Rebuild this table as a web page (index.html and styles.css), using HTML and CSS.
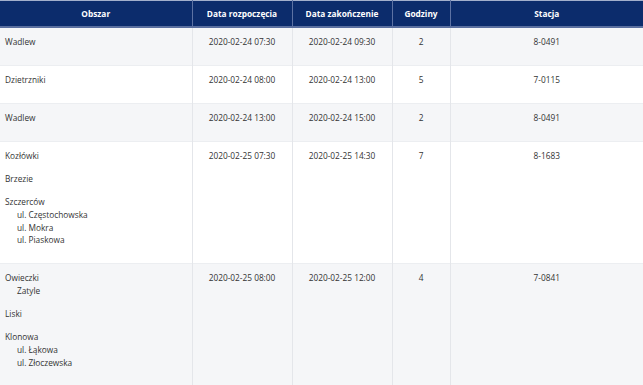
FILE: index.html
```html
<!DOCTYPE html>
<html lang="pl">
<head>
<meta charset="utf-8">
<title>Harmonogram</title>
<link rel="stylesheet" href="styles.css">
</head>
<body>
<table class="schedule">
  <colgroup>
    <col class="c-area">
    <col class="c-date">
    <col class="c-date">
    <col class="c-hours">
    <col class="c-station">
  </colgroup>
  <thead>
    <tr>
      <th>Obszar</th>
      <th>Data rozpoczęcia</th>
      <th>Data zakończenie</th>
      <th>Godziny</th>
      <th>Stacja</th>
    </tr>
  </thead>
  <tbody>
    <tr>
      <td class="area"><p>Wadlew</p></td>
      <td>2020-02-24 07:30</td>
      <td>2020-02-24 09:30</td>
      <td>2</td>
      <td>8-0491</td>
    </tr>
    <tr>
      <td class="area"><p>Dzietrzniki</p></td>
      <td>2020-02-24 08:00</td>
      <td>2020-02-24 13:00</td>
      <td>5</td>
      <td>7-0115</td>
    </tr>
    <tr>
      <td class="area"><p>Wadlew</p></td>
      <td>2020-02-24 13:00</td>
      <td>2020-02-24 15:00</td>
      <td>2</td>
      <td>8-0491</td>
    </tr>
    <tr>
      <td class="area">
        <p>Kozłówki</p>
        <p>Brzezie</p>
        <p>Szczerców<span class="sub">ul. Częstochowska</span><span class="sub">ul. Mokra</span><span class="sub">ul. Piaskowa</span></p>
      </td>
      <td>2020-02-25 07:30</td>
      <td>2020-02-25 14:30</td>
      <td>7</td>
      <td>8-1683</td>
    </tr>
    <tr>
      <td class="area">
        <p>Owieczki<span class="sub">Zatyle</span></p>
        <p>Liski</p>
        <p>Klonowa<span class="sub">ul. Łąkowa</span><span class="sub">ul. Złoczewska</span></p>
      </td>
      <td>2020-02-25 08:00</td>
      <td>2020-02-25 12:00</td>
      <td>4</td>
      <td>7-0841</td>
    </tr>
  </tbody>
</table>
</body>
</html>
```
FILE: styles.css
```css
html, body {
  margin: 0;
  padding: 0;
  background: #ffffff;
}

body {
  font-family: "Open Sans", "Noto Sans", sans-serif;
  font-size: 8.3px;
  color: #333333;
}

.schedule {
  width: 643px;
  border-collapse: collapse;
  table-layout: fixed;
  border-top: 1px solid #a3b0cc;
}

.c-area { width: 192px; }
.c-date { width: 100px; }
.c-hours { width: 58px; }
.c-station { width: 193px; }

.schedule th {
  background: #0c2c6c;
  color: #ffffff;
  font-weight: 700;
  height: 25px;
  padding: 0;
  text-align: center;
  border-left: 1px solid #5d72a3;
  border-bottom: 2px solid #5a6f9f;
}

.schedule th:first-child {
  border-left: none;
}

.schedule td {
  padding: 8px 6px 6px;
  line-height: 12.8px;
  text-align: center;
  vertical-align: top;
  border-left: 1px solid #e4e6ea;
  border-top: 1px solid #eceef1;
}

.schedule td:first-child {
  border-left: none;
}

.schedule tbody tr:nth-child(odd) {
  background: #f5f6f8;
}

.schedule td.area {
  text-align: left;
  padding-left: 5px;
}

.area p {
  margin: 0 0 10.2px;
}

.sub {
  display: block;
  padding-left: 12px;
}
```
